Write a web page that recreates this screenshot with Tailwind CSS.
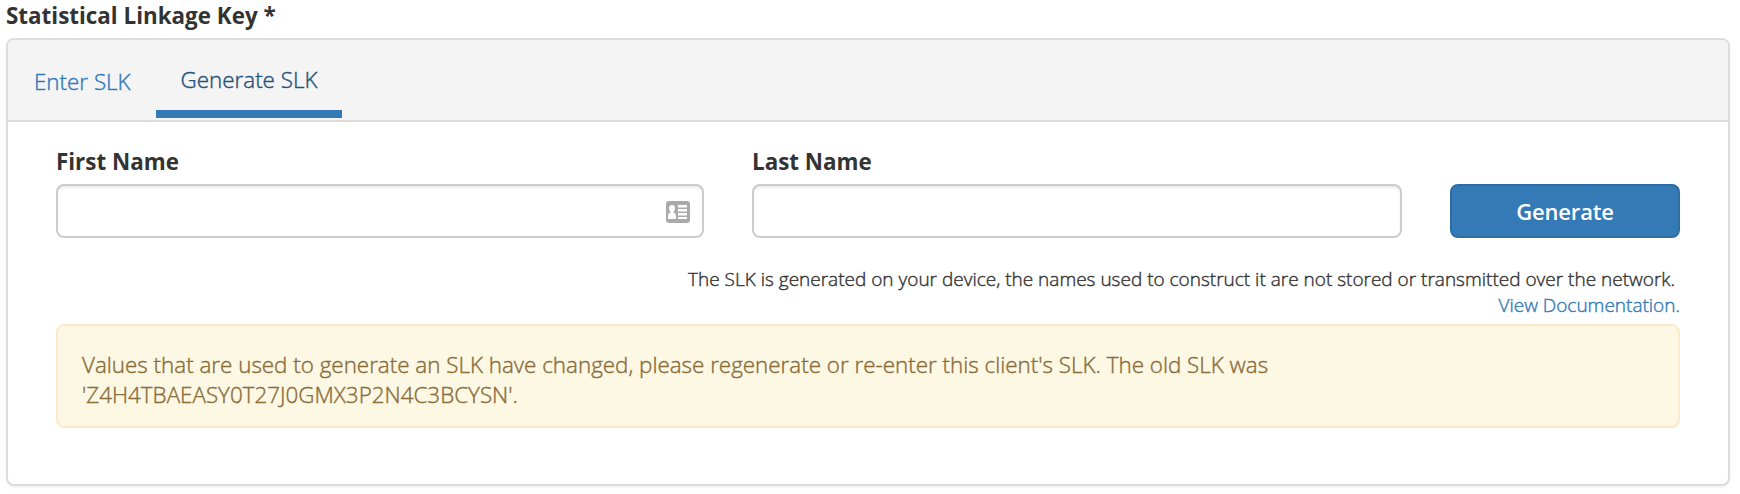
<!DOCTYPE html>
<html lang="en">
<head>
<meta charset="utf-8">
<title>Statistical Linkage Key</title>
<script src="https://cdn.jsdelivr.net/npm/@tailwindcss/browser@4"></script>
</head>
<body class="h-[494px] overflow-hidden bg-white pl-[6px] pr-[10px] font-['Open_Sans',sans-serif] text-[22.4px] leading-[30px] font-light text-[#333]">
<div class="h-[38px] pt-px font-bold"><label class="block">Statistical Linkage Key *</label></div>
<section class="h-[448px] rounded-lg border-2 border-[#ddd] bg-white shadow-[0_2px_2px_rgba(0,0,0,0.05)]">
  <nav class="flex h-[82px] items-start rounded-t-md border-b-2 border-[#ddd] bg-[#f4f4f4] [-webkit-text-stroke:0.4px]">
    <a class="ml-[26px] mt-[27px] w-[98px] whitespace-nowrap text-[#337ab7]">Enter SLK</a>
    <a class="ml-6 h-[78px] w-[186px] border-b-8 border-[#337ab7] pt-[25px] text-center text-[#23527c]">Generate SLK</a>
  </nav>
  <div class="px-12 pt-[25px]">
    <div class="flex items-end">
      <div class="w-[648px]">
        <label class="block h-[37px] font-bold">First Name</label>
        <div class="flex h-[54px] items-center justify-end rounded-lg border-2 border-[#ccc] pr-3 shadow-[inset_0_2px_2px_rgba(0,0,0,0.075)]">
          <svg class="mt-px h-[22px] w-6" viewBox="0 0 24 22"><rect width="24" height="22" rx="3" fill="#aaa"/><path fill="#fff" d="M6 4c2 0 3 1.300 3 3.200 0 1.500-.6 2.700-1.400 3.400v.8c1.700.6 2.400 2 2.400 4V18H2v-2.600c0-2 .7-3.400 2.400-4v-.8C3.600 9.900 3 8.700 3 7.200 3 5.300 4 4 6 4zM12 4h9v2.500h-9zM12 8h9v2.500h-9zM12 12h9v2.500h-9zM12 16h9v2h-9z"/></svg>
        </div>
      </div>
      <div class="ml-12 w-[650px]">
        <label class="block h-[37px] font-bold">Last Name</label>
        <div class="h-[54px] rounded-lg border-2 border-[#ccc] shadow-[inset_0_2px_2px_rgba(0,0,0,0.075)]"></div>
      </div>
      <button class="ml-12 h-[54px] w-[230px] rounded-lg border-2 border-[#2e6da4] bg-[#337ab7] pb-px text-[22px] font-semibold text-white"><span class="tracking-[-0.15px]">Generate</span></button>
    </div>
    <div class="mt-7 flex flex-col items-end text-[19px] leading-[26px] [-webkit-text-stroke:0.4px]">
      <p class="mr-[5px]">The SLK is generated on your device, the names used to construct it are not stored or transmitted over the network.</p>
      <a class="text-[#337ab7]">View Documentation.</a>
    </div>
    <div class="mt-[6px] h-[104px] rounded-lg border-2 border-[#faebcc] bg-[#fcf8e3] px-6 pt-[24px] text-[#8a6d3b] [-webkit-text-stroke:0.4px]">
      <p>Values that are used to generate an SLK have changed, please regenerate or re-enter this client's SLK. The old SLK was<br>'Z4H4TBAEASY0T27J0GMX3P2N4C3BCYSN'.</p>
    </div>
  </div>
</section>
</body>
</html>
